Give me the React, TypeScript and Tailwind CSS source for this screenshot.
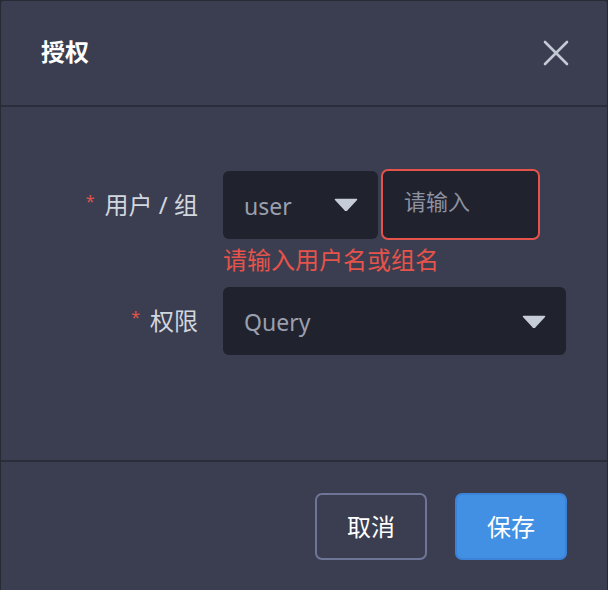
const Caret = () => (
  <svg width="24" height="13" viewBox="0 0 24 13" className="shrink-0">
    <path d="M1.5 1.5 H22.5 L13.2 11.6 Q12 12.8 10.8 11.6 Z" fill="#c7cdd8" stroke="#c7cdd8" strokeWidth="1.5" strokeLinejoin="round" />
  </svg>
);

const Label = ({ text }: { text: string }) => (
  <div className="w-[197px] shrink-0 flex justify-end items-center text-[24px] text-[#d2d6de]">
    <span className="text-[16px] text-[#e5534b] mr-[10px] -mt-[8px]">*</span>
    <span>{text}</span>
  </div>
);

export default function App() {
  return (
    <div
      className="w-[608px] h-[590px] bg-[#252834] overflow-hidden"
      style={{ fontFamily: '"Noto Sans", "Noto Sans CJK SC", sans-serif' }}
    >
      <div className="w-[608px] h-[600px] bg-[#3a3e50] border border-[#262a35] rounded-[3px] flex flex-col">
        {/* header */}
        <div className="h-[106px] flex items-center justify-between pl-[40px] pr-[38px] border-b-2 border-[#2a2d3a]">
          <span className="text-[24px] font-bold text-white -mt-[3px]">授权</span>
          <svg width="26" height="26" viewBox="0 0 26 26">
            <path d="M2 2 L24 24 M24 2 L2 24" stroke="#c3c9d5" strokeWidth="2.6" strokeLinecap="round" />
          </svg>
        </div>

        {/* body */}
        <div className="h-[355px] pt-[62px] border-b-2 border-[#2a2d3a]">
          <div className="flex items-center">
            <Label text="用户 / 组" />
            <div className="ml-[25px] flex items-center gap-[3px]">
              <div className="w-[155px] h-[68px] bg-[#20222d] rounded-[6px] flex items-center justify-between pl-[21px] pr-[20px]">
                <span className="text-[23px] text-[#9a9fae] pt-[4px]">user</span>
                <Caret />
              </div>
              <div className="w-[159px] h-[71px] bg-[#20222d] rounded-[7px] border-2 border-[#e5534b] flex items-center pl-[21px] pb-[6px]">
                <span className="text-[22px] text-[#8c92a2]">请输入</span>
              </div>
            </div>
          </div>
          <div className="ml-[222px] mt-[4px] text-[24px] leading-[32px] text-[#e5534b]">请输入用户名或组名</div>
          <div className="flex items-center mt-[11px]">
            <Label text="权限" />
            <div className="ml-[25px] w-[343px] h-[68px] bg-[#20222d] rounded-[6px] flex items-center justify-between pl-[21px] pr-[20px]">
              <span className="text-[23px] text-[#9a9fae] pt-[2px]">Query</span>
              <Caret />
            </div>
          </div>
        </div>

        {/* footer */}
        <div className="flex justify-end gap-[28px] pr-[40px] pt-[31px]">
          <button className="w-[112px] h-[67px] rounded-[7px] border-2 border-[#6f7596] text-[24px] text-white">取消</button>
          <button className="w-[112px] h-[67px] rounded-[7px] border-2 border-[#3b83d8] bg-[#4290e3] text-[24px] text-white">保存</button>
        </div>
      </div>
    </div>
  );
}
